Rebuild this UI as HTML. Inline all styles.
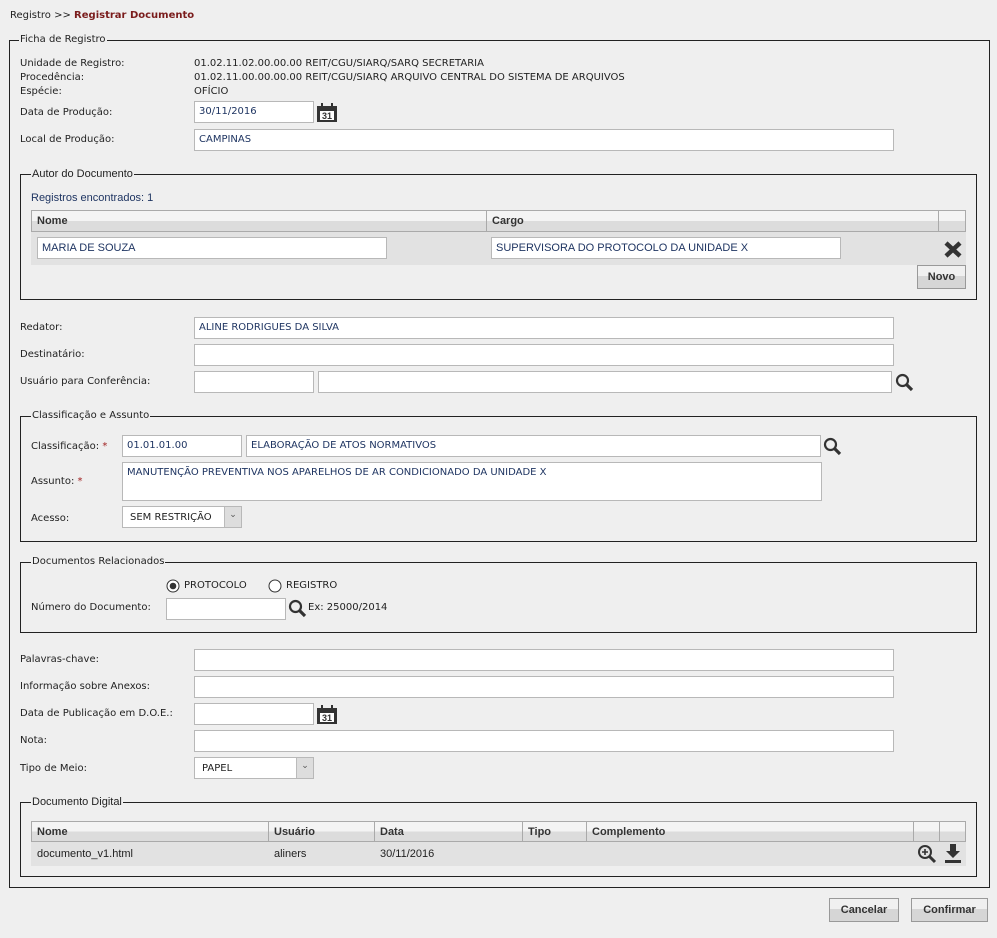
<!DOCTYPE html>
<html><head><meta charset="utf-8"><style>
*{box-sizing:border-box}
body{margin:0;width:997px;height:938px;background:#efefef;font-family:"DejaVu Sans",Verdana,sans-serif;font-size:10px;color:#222;position:relative;overflow:hidden}
.a{position:absolute;white-space:nowrap}
.fs{position:absolute;border:1px solid #222}
.lg{position:absolute;top:-7px;left:10px;background:#efefef;padding:0 1px;font-size:10px}
.in{position:absolute;background:#fff;border:1px solid #b8b8b8;height:22px;color:#1f3562;padding:4px 0 0 4px;font-size:10px;white-space:nowrap;overflow:hidden}
.n{font-family:"Liberation Sans",Arial,sans-serif;font-size:11px}
.th{position:absolute;background:linear-gradient(#f4f4f4 50%,#dcdcdc 50%);border:1px solid #aaa;font-family:"Liberation Sans",Arial,sans-serif;font-weight:bold;font-size:11px;padding:4px 5px;color:#333}
.btn{position:absolute;border:1px solid #999;background:linear-gradient(#f0f0f0 45%,#d6d6d6 45%);font-family:"Liberation Sans",Arial,sans-serif;font-weight:bold;font-size:11px;color:#333;text-align:center;padding-top:5px}
.star{color:#a02020}
</style></head><body>
<div class="a" style="left:10px;top:10px">Registro &gt;&gt; <b style="color:#7a1c1c">Registrar Documento</b></div>

<div class="fs" style="left:9px;top:40px;width:981px;height:848px"><span class="lg" style="left:9px">Ficha de Registro</span></div>
<div class="a" style="left:20px;top:58px">Unidade de Registro:</div>
<div class="a" style="left:194px;top:58px">01.02.11.02.00.00.00 REIT/CGU/SIARQ/SARQ SECRETARIA</div>
<div class="a" style="left:20px;top:72px">Procedência:</div>
<div class="a" style="left:194px;top:72px">01.02.11.00.00.00.00 REIT/CGU/SIARQ ARQUIVO CENTRAL DO SISTEMA DE ARQUIVOS</div>
<div class="a" style="left:20px;top:86px">Espécie:</div>
<div class="a" style="left:194px;top:86px">OFÍCIO</div>
<div class="a" style="left:20px;top:107px">Data de Produção:</div>
<div class="in" style="left:194px;top:101px;width:120px">30/11/2016</div>
<svg class="a" style="left:316px;top:102px" width="22" height="21" viewBox="0 0 22 21"><rect x="1" y="4" width="20" height="16" fill="#333"/><rect x="4" y="9" width="14" height="9" fill="#fff"/><rect x="5" y="1" width="2" height="5" fill="#333"/><rect x="15" y="1" width="2" height="5" fill="#333"/><text x="11" y="17" font-size="9" font-weight="bold" text-anchor="middle" fill="#333" font-family="Liberation Sans">31</text></svg>
<div class="a" style="left:20px;top:134px">Local de Produção:</div>
<div class="in" style="left:194px;top:129px;width:700px">CAMPINAS</div>

<div class="fs" style="left:20px;top:174px;width:957px;height:126px"><span class="lg n" style="left:10px">Autor do Documento</span></div>
<div class="a n" style="left:31px;top:192px;color:#1f3562">Registros encontrados: 1</div>
<div class="th" style="left:31px;top:210px;width:456px;height:22px">Nome</div>
<div class="th" style="left:486px;top:210px;width:453px;height:22px">Cargo</div>
<div class="th" style="left:938px;top:210px;width:28px;height:22px"></div>
<div class="a" style="left:31px;top:232px;width:935px;height:33px;background:#e2e2e2"></div>
<div class="in n" style="left:37px;top:237px;width:350px">MARIA DE SOUZA</div>
<div class="in n" style="left:491px;top:237px;width:350px">SUPERVISORA DO PROTOCOLO DA UNIDADE X</div>
<svg class="a" style="left:943px;top:240px" width="20" height="19"><path d="M3 3L17 16M17 3L3 16" stroke="#333" stroke-width="4.5"/></svg>
<div class="btn" style="left:917px;top:265px;width:49px;height:24px">Novo</div>

<div class="a" style="left:20px;top:322px">Redator:</div>
<div class="in" style="left:194px;top:317px;width:700px">ALINE RODRIGUES DA SILVA</div>
<div class="a" style="left:20px;top:349px">Destinatário:</div>
<div class="in" style="left:194px;top:344px;width:700px"></div>
<div class="a" style="left:20px;top:376px">Usuário para Conferência:</div>
<div class="in" style="left:194px;top:371px;width:120px"></div>
<div class="in" style="left:318px;top:371px;width:574px"></div>
<svg class="a" style="left:895px;top:373px" width="19" height="19"><circle cx="7.5" cy="7.5" r="5.5" fill="none" stroke="#333" stroke-width="2.2"/><path d="M11.5 11.5L17 17" stroke="#333" stroke-width="3.2"/></svg>

<div class="fs" style="left:20px;top:416px;width:957px;height:126px"><span class="lg">Classificação e Assunto</span></div>
<div class="a" style="left:31px;top:441px">Classificação: <span class="star">*</span></div>
<div class="in" style="left:122px;top:435px;width:120px">01.01.01.00</div>
<div class="in" style="left:246px;top:435px;width:575px">ELABORAÇÃO DE ATOS NORMATIVOS</div>
<svg class="a" style="left:823px;top:437px" width="19" height="19"><circle cx="7.5" cy="7.5" r="5.5" fill="none" stroke="#333" stroke-width="2.2"/><path d="M11.5 11.5L17 17" stroke="#333" stroke-width="3.2"/></svg>
<div class="a" style="left:31px;top:476px">Assunto: <span class="star">*</span></div>
<div class="in" style="left:122px;top:462px;width:700px;height:39px">MANUTENÇÃO PREVENTIVA NOS APARELHOS DE AR CONDICIONADO DA UNIDADE X</div>
<div class="a" style="left:31px;top:513px">Acesso:</div>
<div class="in" style="left:122px;top:506px;width:120px;color:#222;padding-left:7px;padding-top:5px">SEM RESTRIÇÃO</div>
<div class="a" style="left:224px;top:507px;width:17px;height:20px;background:#ddd;border-left:1px solid #bbb;text-align:center;font-size:9px;color:#555;padding-top:3px">&#8964;</div>

<div class="fs" style="left:20px;top:562px;width:957px;height:71px"><span class="lg">Documentos Relacionados</span></div>
<svg class="a" style="left:166px;top:579px" width="14" height="14"><circle cx="7" cy="7" r="6" fill="#fff" stroke="#333"/><circle cx="7" cy="7" r="3.3" fill="#333"/></svg>
<div class="a" style="left:184px;top:580px">PROTOCOLO</div>
<svg class="a" style="left:268px;top:579px" width="14" height="14"><circle cx="7" cy="7" r="6" fill="#fff" stroke="#333"/></svg>
<div class="a" style="left:286px;top:580px">REGISTRO</div>
<div class="a" style="left:31px;top:602px">Número do Documento:</div>
<div class="in" style="left:166px;top:598px;width:120px"></div>
<svg class="a" style="left:288px;top:599px" width="19" height="19"><circle cx="7.5" cy="7.5" r="5.5" fill="none" stroke="#333" stroke-width="2.2"/><path d="M11.5 11.5L17 17" stroke="#333" stroke-width="3.2"/></svg>
<div class="a" style="left:308px;top:602px">Ex: 25000/2014</div>

<div class="a" style="left:20px;top:654px">Palavras-chave:</div>
<div class="in" style="left:194px;top:649px;width:700px"></div>
<div class="a" style="left:20px;top:681px">Informação sobre Anexos:</div>
<div class="in" style="left:194px;top:676px;width:700px"></div>
<div class="a" style="left:20px;top:708px">Data de Publicação em D.O.E.:</div>
<div class="in" style="left:194px;top:703px;width:120px"></div>
<svg class="a" style="left:316px;top:704px" width="22" height="21" viewBox="0 0 22 21"><rect x="1" y="4" width="20" height="16" fill="#333"/><rect x="4" y="9" width="14" height="9" fill="#fff"/><rect x="5" y="1" width="2" height="5" fill="#333"/><rect x="15" y="1" width="2" height="5" fill="#333"/><text x="11" y="17" font-size="9" font-weight="bold" text-anchor="middle" fill="#333" font-family="Liberation Sans">31</text></svg>
<div class="a" style="left:20px;top:735px">Nota:</div>
<div class="in" style="left:194px;top:730px;width:700px"></div>
<div class="a" style="left:20px;top:763px">Tipo de Meio:</div>
<div class="in" style="left:194px;top:757px;width:120px;color:#222;padding-left:7px;padding-top:5px">PAPEL</div>
<div class="a" style="left:296px;top:758px;width:17px;height:20px;background:#ddd;border-left:1px solid #bbb;text-align:center;font-size:9px;color:#555;padding-top:3px">&#8964;</div>

<div class="fs" style="left:20px;top:802px;width:957px;height:75px"><span class="lg n">Documento Digital</span></div>
<div class="th" style="left:31px;top:821px;width:238px;height:21px">Nome</div>
<div class="th" style="left:268px;top:821px;width:107px;height:21px">Usuário</div>
<div class="th" style="left:374px;top:821px;width:149px;height:21px">Data</div>
<div class="th" style="left:522px;top:821px;width:65px;height:21px">Tipo</div>
<div class="th" style="left:586px;top:821px;width:328px;height:21px">Complemento</div>
<div class="th" style="left:913px;top:821px;width:27px;height:21px"></div>
<div class="th" style="left:939px;top:821px;width:27px;height:21px"></div>
<div class="a" style="left:31px;top:842px;width:935px;height:24px;background:#e2e2e2"></div>
<div class="a n" style="left:37px;top:848px">documento_v1.html</div>
<div class="a n" style="left:274px;top:848px">aliners</div>
<div class="a n" style="left:380px;top:848px">30/11/2016</div>
<svg class="a" style="left:917px;top:844px" width="20" height="20"><circle cx="8" cy="8" r="6" fill="none" stroke="#333" stroke-width="2"/><path d="M5 8h6M8 5v6" stroke="#333" stroke-width="1.6"/><path d="M12.5 12.5L18 18" stroke="#333" stroke-width="3"/></svg>
<svg class="a" style="left:943px;top:843px" width="20" height="21"><path d="M7 1h6v7h4l-7 7-7-7h4z" fill="#333"/><rect x="2" y="17" width="16" height="3" fill="#333"/></svg>

<div class="btn" style="left:829px;top:898px;width:70px;height:24px">Cancelar</div>
<div class="btn" style="left:911px;top:898px;width:77px;height:24px">Confirmar</div>
</body></html>
